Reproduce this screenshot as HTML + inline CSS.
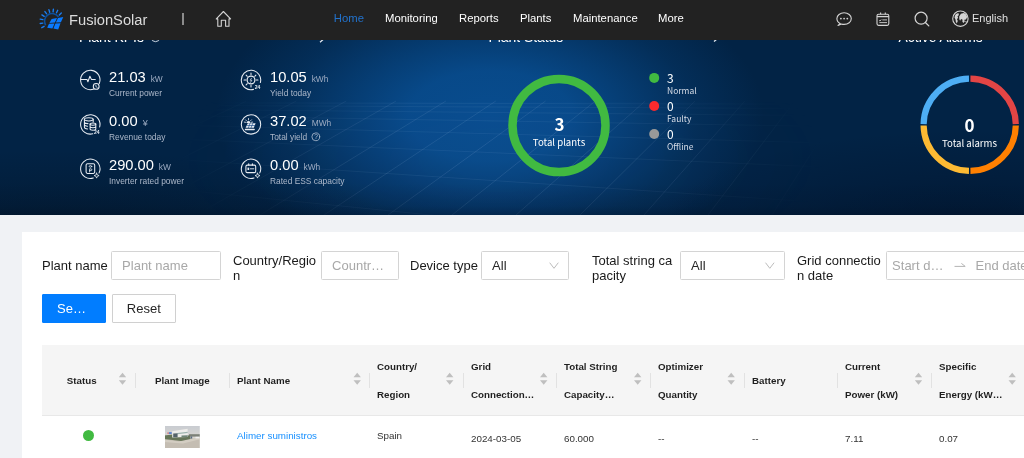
<!DOCTYPE html>
<html lang="en">
<head>
<meta charset="utf-8">
<title>FusionSolar</title>
<style>
*{box-sizing:border-box;margin:0;padding:0}
html{-webkit-font-smoothing:antialiased}
html,body{width:1024px;height:458px;overflow:hidden;background:#f0f2f5;font-family:"Liberation Sans",sans-serif;color:#222}
.abs{position:absolute}
#hdr{position:absolute;left:0;top:0;width:1024px;height:40px;background:#222222;z-index:10;color:#fff}
#hdr .t{position:absolute;white-space:nowrap;line-height:1}
#banner{position:absolute;left:0;top:40px;width:1024px;height:174.5px;overflow:hidden;
 background:#05264f}
#banner .t{position:absolute;white-space:nowrap;line-height:1;color:#fff}
.kv{font-size:14.7px;color:#fff}
#banner .ku{font-size:8.4px;color:#9dabc2;margin-left:-1.5px}
#banner .kl{font-size:8.4px;color:#adb8ca}
.hs{font-family:"Noto Sans CJK SC","DejaVu Sans",sans-serif}
#panel{position:absolute;left:21.8px;top:231.6px;width:1010px;height:240px;background:#fff}
.lbl{position:absolute;font-size:13px;line-height:14.3px;color:#1a1a1a;white-space:nowrap}
.inp{position:absolute;height:28.6px;border:1px solid #d4d4d4;border-radius:1.5px;background:#fff;font-size:13px;color:#a8a8a8;line-height:28.8px;padding-left:10.1px;white-space:nowrap;overflow:hidden}
.inp.sel{color:#262626}
.btn{position:absolute;height:28.9px;width:63.7px;top:293.8px;font-size:13px;line-height:28.6px;text-align:center;border-radius:1px}
#thead{position:absolute;left:42.2px;top:345.2px;width:990px;height:70.7px;background:#f5f5f5;border-bottom:1.2px solid #e8e8e8}
.th{position:absolute;font-size:9.75px;font-weight:bold;color:#1f1f1f;white-space:nowrap;line-height:1}
.td{position:absolute;font-size:9.8px;color:#333;white-space:nowrap;line-height:1}
.sep{position:absolute;top:372.6px;width:1px;height:15.6px;background:#e2e2e2}
.sort{position:absolute;width:8px;height:12px}
</style>
</head>
<body>
<div id="root" style="position:absolute;left:0;top:0;width:1024px;height:458px;overflow:hidden;will-change:transform;opacity:0.999">

<!-- ================= BANNER ================= -->
<div id="banner">
  <svg class="abs" style="left:0;top:0" width="1024" height="175" viewBox="0 0 1024 175">
    <defs>
      <radialGradient id="hl" cx="0" cy="0" r="1" gradientUnits="userSpaceOnUse" gradientTransform="translate(490 76) scale(274 150)">
        <stop offset="0" stop-color="#084c8e" stop-opacity="1"/>
        <stop offset="0.3" stop-color="#084c8e" stop-opacity="0.93"/>
        <stop offset="0.5" stop-color="#084c8e" stop-opacity="0.64"/>
        <stop offset="0.75" stop-color="#084c8e" stop-opacity="0.26"/>
        <stop offset="1" stop-color="#084c8e" stop-opacity="0"/>
      </radialGradient>
      <linearGradient id="bgy" x1="0" x2="0" y1="0" y2="175" gradientUnits="userSpaceOnUse">
        <stop offset="0.82" stop-color="#010c1c" stop-opacity="0"/>
        <stop offset="0.95" stop-color="#010c1c" stop-opacity="0.12"/>
        <stop offset="1" stop-color="#010c1c" stop-opacity="0.3"/>
      </linearGradient>
      <radialGradient id="vl" cx="0" cy="0" r="1" gradientUnits="userSpaceOnUse" gradientTransform="translate(60 185) scale(330 75)">
        <stop offset="0" stop-color="#030f1c" stop-opacity="0.4"/>
        <stop offset="1" stop-color="#030f1c" stop-opacity="0"/>
      </radialGradient>
      <radialGradient id="vr" cx="0" cy="0" r="1" gradientUnits="userSpaceOnUse" gradientTransform="translate(960 185) scale(300 95)">
        <stop offset="0" stop-color="#010c20" stop-opacity="0.45"/>
        <stop offset="1" stop-color="#010c20" stop-opacity="0"/>
      </radialGradient>
      <radialGradient id="gm" cx="0" cy="0" r="1" gradientUnits="userSpaceOnUse" gradientTransform="translate(500 120) scale(330 130)">
        <stop offset="0" stop-color="#fff" stop-opacity="1"/>
        <stop offset="0.5" stop-color="#fff" stop-opacity="0.75"/>
        <stop offset="1" stop-color="#fff" stop-opacity="0"/>
      </radialGradient>
      <mask id="gmask"><rect width="1024" height="175" fill="url(#gm)"/></mask>
    </defs>
    <rect width="1024" height="175" fill="#022345"/>
    <rect width="1024" height="175" fill="url(#hl)"/>
    <g mask="url(#gmask)">
      <path d="M0 62H1024V175H0Z" fill="#7fb2ee" fill-opacity="0.025"/>
      <path d="M120 62.7L1000 64.5M120 65.1L1000 69.5M120 68.9L1000 77.3M120 74.7L1000 89.3M120 83.5L1000 107.8M120 96.5L1000 134.7M120 115.7L1000 174.3M120 143.7L1000 232.4" stroke="#cfe2ff" stroke-opacity="0.085" stroke-width="0.9" fill="none"/>
      <path d="M-60 175L196.8 61M4 175L246.6 61M68 175L296.4 61M132 175L346.3 61M196 175L396.1 61M260 175L445.9 61M324 175L495.8 61M388 175L545.6 61M452 175L595.4 61M516 175L645.3 61M580 175L695.1 61M644 175L744.9 61M708 175L794.8 61M772 175L844.6 61M836 175L894.4 61M900 175L944.3 61M964 175L994.1 61M1028 175L1043.9 61" stroke="#cfe2ff" stroke-opacity="0.13" stroke-width="0.9" fill="none"/>
    </g>
    <rect width="1024" height="175" fill="url(#bgy)"/>
    <rect width="1024" height="175" fill="url(#vl)"/>
    <rect width="1024" height="175" fill="url(#vr)"/>
  </svg>

  <!-- clipped section titles -->
  <div class="t" style="left:79px;top:-8.9px;font-size:13.9px">Plant KPIs</div>
  <div class="t" style="left:488.4px;top:-9.2px;font-size:13.9px">Plant Status</div>
  <div class="t" style="left:898.6px;top:-9.2px;font-size:13.9px">Active Alarms</div>

  <!-- KPI values -->
  <div class="t kv" style="left:109px;top:29.5px">21.03 <span class="ku">&nbsp;kW</span></div>
  <div class="t kl" style="left:109px;top:48.6px">Current power</div>
  <div class="t kv" style="left:109px;top:73.8px">0.00 <span class="ku" style="margin-left:1px;font-size:9px">¥</span></div>
  <div class="t kl" style="left:109px;top:93px">Revenue today</div>
  <div class="t kv" style="left:109px;top:118px">290.00 <span class="ku">&nbsp;kW</span></div>
  <div class="t kl" style="left:109px;top:137.1px">Inverter rated power</div>

  <div class="t kv" style="left:270px;top:29.5px">10.05 <span class="ku">&nbsp;kWh</span></div>
  <div class="t kl" style="left:270px;top:48.6px">Yield today</div>
  <div class="t kv" style="left:270px;top:73.8px">37.02 <span class="ku">&nbsp;MWh</span></div>
  <div class="t kl" style="left:270px;top:93px">Total yield</div>
  <div class="t kv" style="left:270px;top:118px">0.00 <span class="ku">&nbsp;kWh</span></div>
  <div class="t kl" style="left:270px;top:137.1px">Rated ESS capacity</div>

  <!-- KPI icons + donuts -->
  <svg class="abs" style="left:0;top:0" width="1024" height="175" viewBox="0 0 1024 175" fill="none" stroke="#fff" stroke-width="1.2">
    <g stroke="#e9edf3" stroke-width="1.05" stroke-linecap="round">
    <path d="M93.93 48.99A9.7 9.7 0 1 1 99.29 43.63"/>
    <path d="M80.6 39.4H87.0l0.9 2.3 2-5.5 1.5 3.2h3.9" stroke-linejoin="round"/>
    <circle cx="96.2" cy="46.4" r="2.9"/><path d="M95.9 45.2v1.4l1.2 0.7" stroke-width="0.8"/>
    <path d="M92.81 93.77A9.7 9.7 0 1 1 99.67 86.91"/>
    <ellipse cx="88.8" cy="79.3" rx="4.4" ry="1.6"/>
    <path d="M84.4 79.3V87.2c0 0.9 1.4 1.6 3.2 1.7M93.2 79.3v2.6M84.4 82.0c0 0.9 1.6 1.6 3.6 1.6M84.4 84.6c0 0.9 1.4 1.6 3.2 1.6"/>
    <ellipse cx="92.9" cy="84.1" rx="2.9" ry="1.2"/>
    <path d="M90.1 84.1V89.0c0 1.6 5.7 1.6 5.7 0V84.1M90.1 86.5c0 1.6 5.7 1.6 5.7 0"/>
    <path d="M93.30 138.03A9.7 9.7 0 1 1 99.09 132.90"/>
    <rect x="86.1" y="123.8" width="8.6" height="9.6" rx="1.3"/>
    <ellipse cx="90.5" cy="126.4" rx="1.3" ry="0.8" stroke-width="0.8"/>
    <path d="M89.6 132.0v-3.2h1.3a0.9 0.9 0 0 1 0 1.8h-1.3" stroke-width="0.8"/>
    <path d="M96.6 133.1L97.3 134.9L99.1 135.6L97.3 136.3L96.6 138.1L95.9 136.3L94.1 135.6L95.9 134.9Z" stroke-width="0.8" stroke-linejoin="round"/>
    <path d="M253.51 49.37A9.7 9.7 0 1 1 260.37 42.51"/>
    <circle cx="251.0" cy="40.0" r="3.9" stroke-width="1.2"/>
    <path d="M256.2 40.0L258.0 40.0M251.0 45.2L251.0 47.0M247.3 43.7L246.1 44.9M245.8 40.0L244.0 40.0M247.3 36.3L246.1 35.1M251.0 34.8L251.0 33.0M254.7 36.3L255.9 35.1"/>
    <path d="M251.5 38.2l-1.3 2.1h1.6l-1.3 2.1" stroke-width="0.7" stroke-linejoin="round"/>
    <circle cx="251.0" cy="84.4" r="9.7"/>
    <path d="M247.8 83.2H255.6L253.8 87.8H245.6Z" fill="#e6ebf2" stroke="none"/>
    <path d="M246.8 85.5H254.8M250.1 83.2L248.4 87.8M252.8 83.2L251.1 87.8" stroke="#0a3f80" stroke-width="0.6"/>
    <path d="M245.4 89.5H254.2" stroke-width="1.3"/>
    <path d="M246.4 83.0a2.1 2.1 0 0 1 4.2 0Z" fill="#e6ebf2" stroke="none"/>
    <path d="M245.6 82.3L244.3 82.1M246.4 80.7L245.5 79.8M248.5 79.9L248.5 78.5M250.6 80.7L251.5 79.8M251.4 82.3L252.7 82.1" stroke-width="0.8"/>
    <circle cx="315.8" cy="96.8" r="3.9" stroke="#b4c0d2" stroke-width="0.8"/>
    <path d="M254.00 138.03A9.7 9.7 0 1 1 259.79 132.90"/>
    <rect x="245.9" y="125.1" width="9.8" height="7.5" rx="1.4"/>
    <path d="M248.7 125.1v-1.3M252.4 125.1v-1.3" stroke-width="1.1"/>
    <rect x="247.5" y="127.6" width="1.7" height="2.4" fill="#e6ebf2" stroke="none"/>
    <path d="M250.4 128.8h3.4" stroke-width="0.9"/>
    <path d="M257.5 133.1L258.2 134.9L260.0 135.6L258.2 136.3L257.5 138.1L256.8 136.3L255.0 135.6L256.8 134.9Z" stroke-width="0.8" stroke-linejoin="round"/>
    </g>
    <g fill="#e6ebf2" stroke="none" font-family="Liberation Sans, sans-serif" font-weight="bold" font-size="5">
      <text x="94.1" y="93.8">24</text>
      <text x="254.8" y="49.4">24</text>
    </g>
    <text x="314.2" y="99.2" fill="#b4c0d2" stroke="none" font-family="Liberation Sans, sans-serif" font-size="6.6">?</text>
    <circle cx="155.5" cy="-2.3" r="4" stroke="#dfe6ef" stroke-width="0.9"/>
    <path d="M326 -3L320 2.2M720 -3.6L714 1.6" stroke="#e3e8ef" stroke-width="1.3"/>
    <!-- plants donut -->
    <circle cx="559" cy="85.5" r="46.5" stroke="#41ba41" stroke-width="8.5"/>
    <!-- legend dots -->
    <circle cx="654.2" cy="37.9" r="5" fill="#41ba41" stroke="none"/>
    <circle cx="654.2" cy="66" r="5" fill="#fa2a2d" stroke="none"/>
    <circle cx="654.2" cy="94" r="5" fill="#999999" stroke="none"/>
    <!-- alarms donut -->
    <g stroke-width="6.2">
      <path d="M970.42 38.71A46.1 46.1 0 0 1 1015.79 84.08" stroke="#e34545"/>
      <path d="M1015.79 85.52A46.1 46.1 0 0 1 970.42 130.89" stroke="#ff8000"/>
      <path d="M968.98 130.89A46.1 46.1 0 0 1 923.61 85.52" stroke="#fdba33"/>
      <path d="M923.61 84.08A46.1 46.1 0 0 1 968.98 38.71" stroke="#4eaef4"/>
    </g>
  </svg>

  <div class="t hs" style="left:509.5px;width:100px;text-align:center;top:75px;font-size:17px;font-weight:bold">3</div>
  <div class="t hs" style="left:509px;width:100px;text-align:center;top:98px;font-size:9.6px">Total plants</div>
  <div class="t hs" style="left:667px;top:32px;font-size:12px">3</div>
  <div class="t hs" style="left:667px;top:46px;font-size:8.5px;color:#d5dbe6">Normal</div>
  <div class="t hs" style="left:667px;top:60px;font-size:12px">0</div>
  <div class="t hs" style="left:667px;top:74px;font-size:8.5px;color:#d5dbe6">Faulty</div>
  <div class="t hs" style="left:667px;top:88px;font-size:12px">0</div>
  <div class="t hs" style="left:667px;top:102px;font-size:8.5px;color:#d5dbe6">Offline</div>

  <div class="t hs" style="left:919.5px;width:100px;text-align:center;top:75.5px;font-size:17px;font-weight:bold">0</div>
  <div class="t hs" style="left:919.5px;width:100px;text-align:center;top:98.5px;font-size:9.6px">Total alarms</div>
</div>

<!-- ================= HEADER ================= -->
<div id="hdr">

  <svg class="abs" style="left:0;top:0" width="1024" height="40" viewBox="0 0 1024 40" fill="none">
    <!-- logo -->
    <path d="M44.1 26.3L41.8 27.7M42.8 23.1L40.2 23.5M42.9 19.6L40.2 19.1M44.2 16.3L41.9 14.9M46.5 13.7L44.9 11.6M49.7 12.2L48.9 9.6M53.1 11.8L53.4 9.1M56.5 12.8L57.7 10.3M59.3 14.9L61.3 13.0" stroke="#1a7df0" stroke-width="1.4" stroke-linecap="round"/>
    <path d="M45.7 25.2 A7.6 7.6 0 0 1 58.5 17.0" stroke="#0d4f9a" stroke-width="1.6"/>
    <path d="M51.6 18.9 L57.0 18.1 L54.9 22.6 L49.4 22.9 Z M58.0 17.9 L63.3 17.1 L60.9 22.3 L55.9 22.55 Z M49.0 23.8 L54.5 23.5 L52.4 28.4 L47.2 27.7 Z M55.5 23.45 L60.5 23.2 L58.2 29.5 L53.4 28.6 Z" fill="#0a7aff"/>
    <!-- home -->
    <path d="M216.3 18.9 L223.4 11.5 L230.6 18.9 H229 V26.2 H225.6 V20.2 H221.3 V26.2 H217.8 V18.9 Z" stroke="#d4d4d4" stroke-width="1.1" stroke-linejoin="round"/>
    <!-- chat -->
    <path d="M840.2 23.6 C838.2 22.6 836.9 20.8 836.9 18.6 C836.9 15.3 840.1 12.8 844.1 12.8 C848.1 12.8 851.3 15.3 851.3 18.6 C851.3 21.9 848.1 24.4 844.1 24.4 C843.2 24.4 842.4 24.3 841.6 24.1 L838 25.4 Z" stroke="#d4d4d4" stroke-width="1.1" stroke-linejoin="round"/>
    <circle cx="840.9" cy="18.6" r="0.9" fill="#d4d4d4"/><circle cx="844.1" cy="18.6" r="0.9" fill="#d4d4d4"/><circle cx="847.3" cy="18.6" r="0.9" fill="#d4d4d4"/>
    <!-- calendar -->
    <rect x="877" y="14.2" width="11.8" height="11.2" rx="1.6" stroke="#d4d4d4" stroke-width="1.1"/>
    <path d="M880.6 12.4V14.2M885.3 12.4V14.2" stroke="#d4d4d4" stroke-width="1.1"/>
    <path d="M877 16.6H888.8" stroke="#d4d4d4" stroke-width="1.3"/>
    <path d="M879.2 20.3l0.8 0.8 1.2-1.6M882.3 19.9H887M879.4 22.6H887" stroke="#d4d4d4" stroke-width="0.9"/>
    <!-- search -->
    <circle cx="921.1" cy="18.2" r="6" stroke="#d4d4d4" stroke-width="1.2"/>
    <path d="M925.4 22.5L928.8 25.9" stroke="#d4d4d4" stroke-width="1.3" stroke-linecap="round"/>
    <!-- globe -->
    <circle cx="960.4" cy="18.7" r="7.7" stroke="#d4d4d4" stroke-width="1.1"/>
    <path d="M956.0 14.1L958.4 13.1L958.9 15.0L957.5 16.4L958.1 17.8L957.0 19.3L957.8 21.1L956.8 23.4L955.8 21.8L955.5 19.5L954.5 17.6L955.0 15.5ZM959.2 16.4L960.9 13.8L963.9 13.1L966.2 14.6L967.2 17.1L966.0 19.5L964.3 19.7L964.8 21.4L963.4 23.1L962.3 21.4L962.6 19.8L961.1 18.9L960.1 20.7L959.3 19.3ZM965.6 20.9L966.6 21.3L966.1 22.5L965.3 22.0Z" fill="#d4d4d4"/>
  </svg>
  <div class="t" style="left:69px;top:13.4px;font-size:14.7px;color:#dcdcdc">FusionSolar</div>
  <div class="t" style="left:182.4px;top:13.2px;width:1.4px;height:11.4px;background:#8c8c8c"></div>
  <div class="t" style="left:333.8px;top:12.7px;font-size:11.3px;color:#2272cc">Home</div>
  <div class="t" style="left:385px;top:12.7px;font-size:11.3px">Monitoring</div>
  <div class="t" style="left:459px;top:12.7px;font-size:11.3px">Reports</div>
  <div class="t" style="left:520px;top:12.7px;font-size:11.3px">Plants</div>
  <div class="t" style="left:573px;top:12.7px;font-size:11.3px">Maintenance</div>
  <div class="t" style="left:658px;top:12.7px;font-size:11.3px">More</div>
  <div class="t" style="left:972px;top:12.7px;font-size:11px;color:#e0e0e0">English</div>
</div>

<!-- ================= PANEL ================= -->
<div id="panel"></div>
<div class="lbl" style="left:42px;top:259.3px">Plant name</div>
<div class="inp" style="left:111px;top:251.3px;width:110px">Plant name</div>
<div class="lbl" style="left:233px;top:254.3px">Country/Regio<br>n</div>
<div class="inp" style="left:321px;top:251.3px;width:78px">Countr…</div>
<div class="lbl" style="left:410px;top:259.3px">Device type</div>
<div class="inp sel" style="left:481px;top:251.3px;width:88px">All</div>
<div class="lbl" style="left:592px;top:254.3px">Total string ca<br>pacity</div>
<div class="inp sel" style="left:680px;top:251.3px;width:105px">All</div>
<div class="lbl" style="left:797px;top:254.3px">Grid connectio<br>n date</div>
<div class="inp" style="left:885.5px;top:251.3px;width:160px;padding-left:0"><span style="position:absolute;left:5.6px">Start d…</span><span style="position:absolute;left:89px">End date</span></div>

<svg class="abs" style="left:0;top:240px" width="1024" height="50" viewBox="0 240 1024 50" fill="none" stroke="#bdbdbd" stroke-width="1">
  <path d="M549.7 262.7L554 268.3L558.3 262.7"/>
  <path d="M765.5 262.7L769.8 268.3L774.1 262.7"/>
  <path d="M954.5 266.4H965.2L961.4 263.4" stroke="#b5b5b5" stroke-linejoin="round"/>
</svg>
<div class="btn" style="left:42.1px;background:#007dff;color:#fff;border:1px solid #007dff;text-align:left;padding-left:14px">Se…</div>
<div class="btn" style="left:112px;background:#fff;color:#262626;border:1px solid #d0d0d0">Reset</div>

<div id="thead"></div>
<div class="th" style="left:66.8px;top:376px">Status</div>
<div class="th" style="left:155px;top:376px">Plant Image</div>
<div class="th" style="left:237px;top:376px">Plant Name</div>
<div class="th" style="left:377px;top:362px">Country/</div>
<div class="th" style="left:377px;top:390px">Region</div>
<div class="th" style="left:471px;top:362px">Grid</div>
<div class="th" style="left:471px;top:390px">Connection…</div>
<div class="th" style="left:564px;top:362px">Total String</div>
<div class="th" style="left:564px;top:390px">Capacity…</div>
<div class="th" style="left:658px;top:362px">Optimizer</div>
<div class="th" style="left:658px;top:390px">Quantity</div>
<div class="th" style="left:752px;top:376px">Battery</div>
<div class="th" style="left:845px;top:362px">Current</div>
<div class="th" style="left:845px;top:390px">Power (kW)</div>
<div class="th" style="left:939px;top:362px">Specific</div>
<div class="th" style="left:939px;top:390px">Energy (kW…</div>

<svg class="abs" style="left:0;top:370px" width="1024" height="18" viewBox="0 370 1024 18"><path d="M118.8 377.2L122.5 372.7L126.2 377.2ZM118.8 380.2L122.5 384.7L126.2 380.2ZM353.5 377.2L357.2 372.7L360.9 377.2ZM353.5 380.2L357.2 384.7L360.9 380.2ZM446.0 377.2L449.7 372.7L453.4 377.2ZM446.0 380.2L449.7 384.7L453.4 380.2ZM540.0 377.2L543.7 372.7L547.4 377.2ZM540.0 380.2L543.7 384.7L547.4 380.2ZM634.0 377.2L637.7 372.7L641.4 377.2ZM634.0 380.2L637.7 384.7L641.4 380.2ZM727.5 377.2L731.2 372.7L734.9 377.2ZM727.5 380.2L731.2 384.7L734.9 380.2ZM914.8 377.2L918.5 372.7L922.2 377.2ZM914.8 380.2L918.5 384.7L922.2 380.2ZM1008.5 377.2L1012.2 372.7L1015.9 377.2ZM1008.5 380.2L1012.2 384.7L1015.9 380.2Z" fill="#bfbfbf"/></svg>
<svg class="abs" style="left:165.1px;top:425.9px" width="34.8" height="22" viewBox="0 0 34.8 22">
  <defs><filter id="tb" x="-5%" y="-5%" width="110%" height="110%"><feGaussianBlur stdDeviation="0.45"/></filter>
  <linearGradient id="sky" x1="0" x2="0" y1="0" y2="1"><stop offset="0" stop-color="#c6cad1"/><stop offset="0.5" stop-color="#d8d6d2"/><stop offset="1" stop-color="#d8d6d2"/></linearGradient>
  <clipPath id="tc"><rect width="34.8" height="22"/></clipPath></defs>
  <g clip-path="url(#tc)"><g filter="url(#tb)">
  <rect x="-2" y="-2" width="39" height="26" fill="url(#sky)"/>
  <rect x="-2" y="12.4" width="39" height="12" fill="#c4bdb2"/>
  <path d="M-1 13.5L14 15.5L24 13L36 11.5V13L18 17.5L-1 16Z" fill="#d3cdc2"/>
  <rect x="24" y="8.2" width="12" height="2.4" fill="#7c8078"/>
  <path d="M-1 9.5L8 8.6L25 9.5L25.5 13L16 15L-1 13Z" fill="#667458"/>
  <path d="M7.2 5.3L22.6 2.8L22.8 11L7.2 11.4Z" fill="#eeedea"/>
  <path d="M12.3 7.1L22.7 5.8V7.1L12.3 8.2Z" fill="#9db4ae"/>
  <path d="M8.2 7.4L12.6 7.2V11.2L8.2 11.3Z" fill="#55646b"/>
  <path d="M16.5 9.6L22.7 9.3V11.1L16.5 11.3Z" fill="#6f8577"/>
  <rect x="3.9" y="6.1" width="2.8" height="1.9" fill="#5b84cc"/>
  <rect x="2.5" y="6.3" width="1.2" height="1.7" fill="#d86a72"/>
  <rect x="30.5" y="10.8" width="3.6" height="1.6" fill="#efefef"/>
  <rect x="25.6" y="10.4" width="1.6" height="2.2" fill="#5a6a80"/>
  </g></g>
</svg>
<div class="sep" style="left:135px"></div>
<div class="sep" style="left:229px"></div>
<div class="sep" style="left:369px"></div>
<div class="sep" style="left:463px"></div>
<div class="sep" style="left:556px"></div>
<div class="sep" style="left:650px"></div>
<div class="sep" style="left:744px"></div>
<div class="sep" style="left:837px"></div>
<div class="sep" style="left:931px"></div>

<div class="abs" style="left:83px;top:430px;width:11px;height:11px;border-radius:50%;background:#41ba41"></div>
<div class="td" style="left:237px;top:431px;color:#1890ff">Alimer suministros</div>
<div class="td" style="left:377px;top:431px">Spain</div>
<div class="td" style="left:471px;top:434px">2024-03-05</div>
<div class="td" style="left:564px;top:434px">60.000</div>
<div class="td" style="left:658px;top:434px">--</div>
<div class="td" style="left:752px;top:434px">--</div>
<div class="td" style="left:845px;top:434px">7.11</div>
<div class="td" style="left:939px;top:434px">0.07</div>

</div>
</body>
</html>
